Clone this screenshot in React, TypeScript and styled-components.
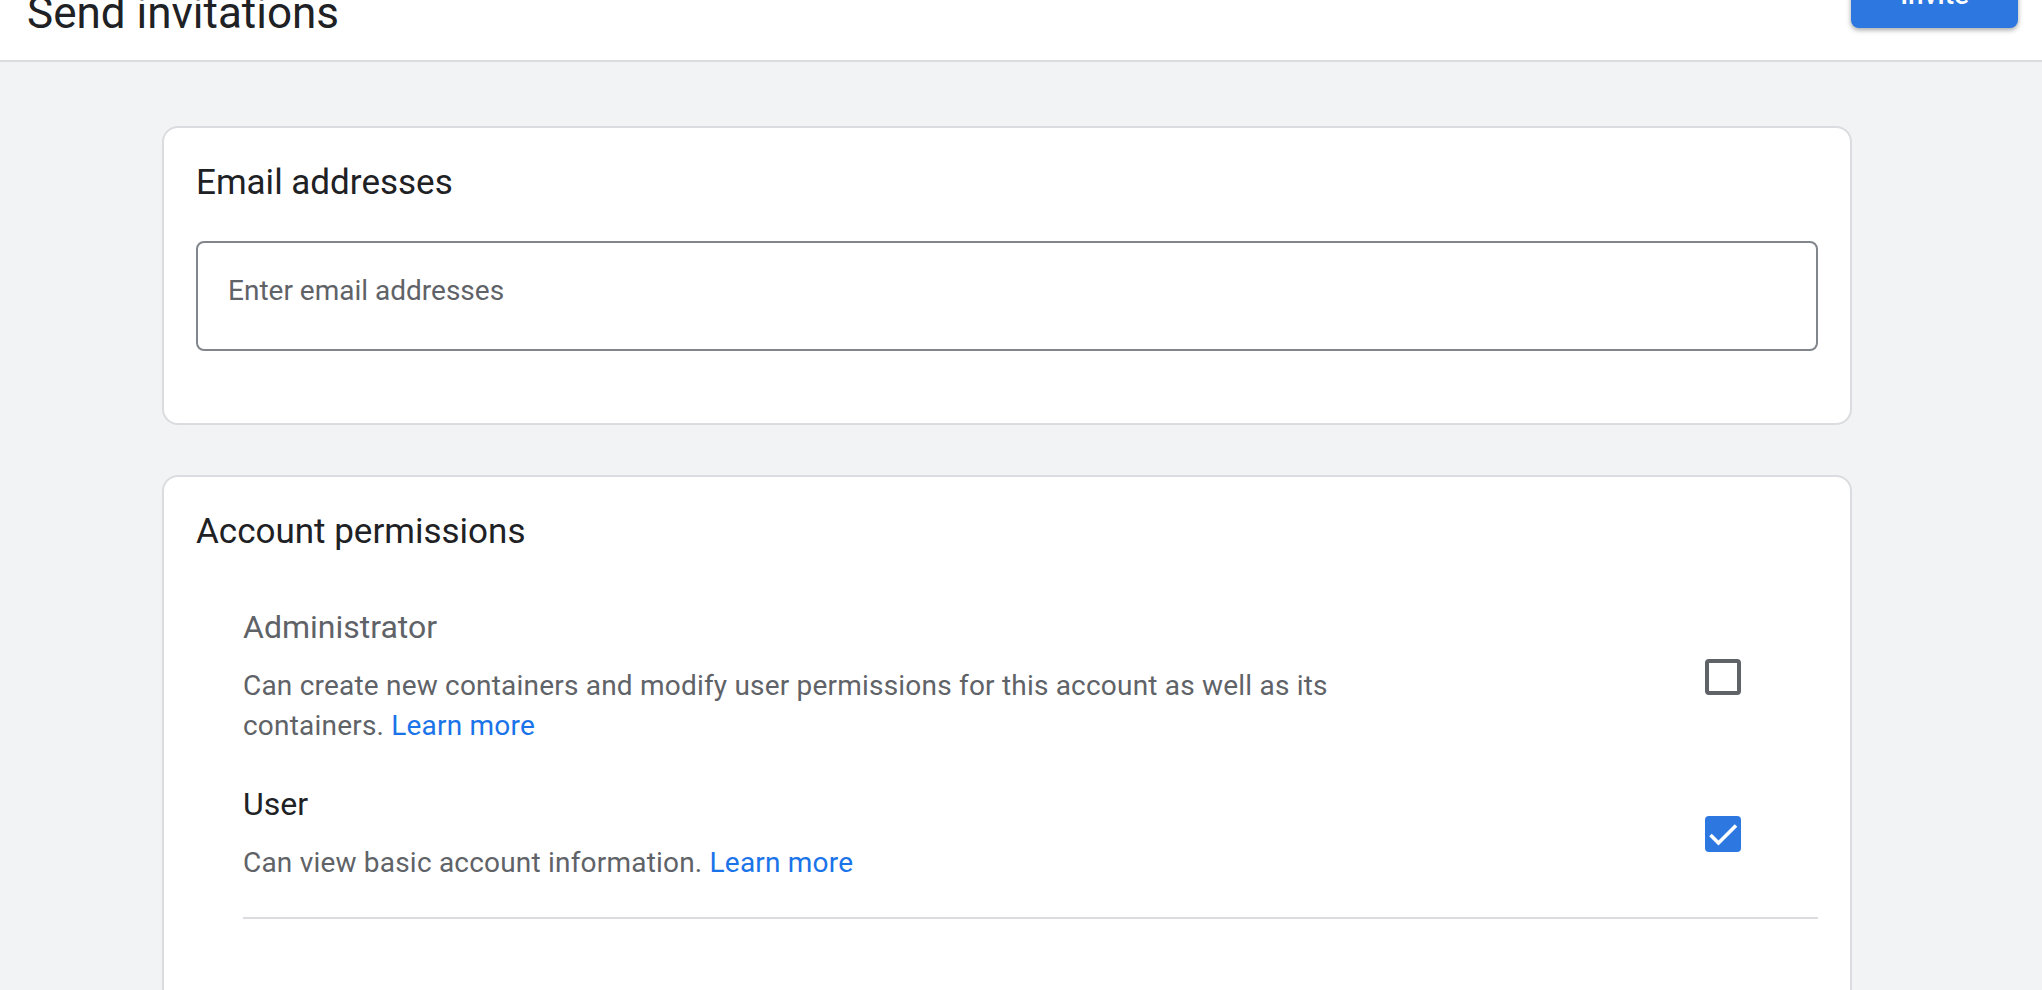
import styled, { createGlobalStyle } from "styled-components";

const GlobalStyle = createGlobalStyle`
  html, body {
    margin: 0;
    padding: 0;
    overflow: hidden;
    background: #f1f3f4;
    font-family: Roboto, "Liberation Sans", Arial, sans-serif;
    color: #202124;
  }
  * {
    box-sizing: border-box;
  }
`;

type Permission = {
  name: string;
  description: string;
  checked: boolean;
  muted?: boolean;
};

const permissions: Permission[] = [
  {
    name: "Administrator",
    description:
      "Can create new containers and modify user permissions for this account as well as its containers.",
    checked: false,
    muted: true
  },
  {
    name: "User",
    description: "Can view basic account information.",
    checked: true
  }
];

const App = () => {
  return (
    <>
      <GlobalStyle />
      <Header>
        <Title>Send invitations</Title>
        <InviteButton type="button">Invite</InviteButton>
      </Header>
      <Main>
        <Card>
          <CardHeading>Email addresses</CardHeading>
          <EmailInput placeholder="Enter email addresses" />
        </Card>
        <Card $tall>
          <CardHeading>Account permissions</CardHeading>
          <Rows>
            {permissions.map((p) => (
              <Row key={p.name}>
                <RowText>
                  <RowTitle $muted={p.muted}>{p.name}</RowTitle>
                  <RowDesc>
                    {p.description} <Link href="#">Learn more</Link>
                  </RowDesc>
                </RowText>
                <Checkbox $checked={p.checked} role="checkbox" aria-checked={p.checked}>
                  {p.checked && (
                    <svg width="36" height="36" viewBox="0 0 36 36">
                      <polyline
                        points="5.5,19 13.5,27 31,9.5"
                        fill="none"
                        stroke="#fff"
                        strokeWidth="3.6"
                      />
                    </svg>
                  )}
                </Checkbox>
              </Row>
            ))}
            <Divider />
          </Rows>
        </Card>
      </Main>
    </>
  );
};

export default App;

const Header = styled.header`
  height: 60px;
  background: #fff;
  border-bottom: 2px solid #dadce0;
  display: flex;
  align-items: flex-end;
  justify-content: space-between;
  padding: 0 24px 0 27px;
  overflow: hidden;
  box-sizing: content-box;
`;

const Title = styled.h1`
  margin: 0 0 21px;
  font-size: 44px;
  line-height: 52px;
  font-weight: 400;
  color: #202124;
`;

const InviteButton = styled.button`
  flex: 0 0 auto;
  height: 68px;
  margin-bottom: 32px;
  padding: 0 49px;
  border: none;
  border-radius: 8px;
  background: #2d77e0;
  color: #fff;
  font-family: Roboto, "Liberation Sans", Arial, sans-serif;
  font-size: 28px;
  font-weight: 500;
  box-shadow: 0 2px 4px rgba(60, 64, 67, 0.35), 0 2px 6px rgba(60, 64, 67, 0.15);
`;

const Main = styled.main`
  display: flex;
  flex-direction: column;
  gap: 50px;
  padding: 64px 190px 0 162px;
`;

const Card = styled.section<{ $tall?: boolean }>`
  background: #fff;
  border: 2px solid #dadce0;
  border-radius: 16px;
  padding: 35px 32px ${(p) => (p.$tall ? "240px" : "72px")};
`;

const CardHeading = styled.h2`
  margin: 0 0 38px;
  font-size: 35px;
  line-height: 40px;
  font-weight: 400;
  color: #202124;
`;

const EmailInput = styled.input`
  display: block;
  width: 100%;
  height: 110px;
  border: 2px solid #80868b;
  border-radius: 8px;
  padding: 0 30px 11px;
  font-family: Roboto, "Liberation Sans", Arial, sans-serif;
  font-size: 28px;
  color: #202124;
  background: #fff;
  outline: none;

  &::placeholder {
    color: #5f6368;
  }
`;

const Rows = styled.div`
  display: flex;
  flex-direction: column;
  gap: 38px;
  margin: 55px 0 0 47px;
`;

const Row = styled.div`
  display: flex;
  align-items: center;
  justify-content: space-between;
`;

const RowText = styled.div`
  flex: 1 1 auto;
  max-width: 1150px;
`;

const RowTitle = styled.div<{ $muted?: boolean }>`
  font-size: 32px;
  line-height: 40px;
  margin-bottom: 19px;
  color: ${(p) => (p.$muted ? "#5f6368" : "#202124")};
`;

const RowDesc = styled.div`
  font-size: 28px;
  line-height: 40px;
  letter-spacing: 0.2px;
  color: #5f6368;
`;

const Link = styled.a`
  color: #1a73e8;
  text-decoration: none;
`;

const Checkbox = styled.div<{ $checked: boolean }>`
  flex: 0 0 auto;
  width: 36px;
  height: 36px;
  margin-right: 77px;
  border-radius: 4px;
  border: ${(p) => (p.$checked ? "none" : "4px solid #5f6368")};
  background: ${(p) => (p.$checked ? "#2d77e0" : "#fff")};
  display: flex;
  align-items: center;
  justify-content: center;
`;

const Divider = styled.div`
  height: 2px;
  background: #dadce0;
  margin-top: -4px;
`;
